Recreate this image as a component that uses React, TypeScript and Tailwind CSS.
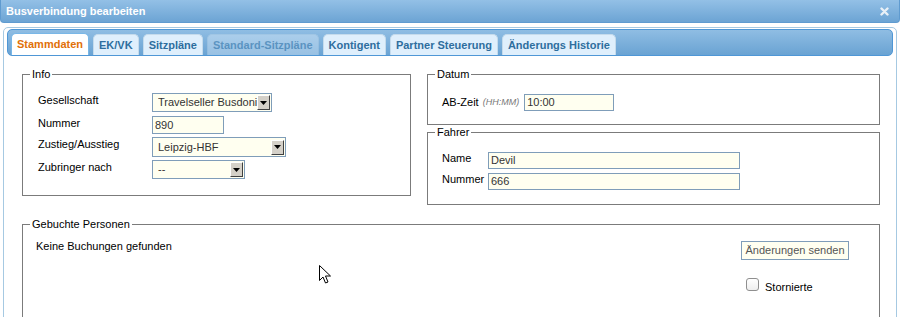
import React from "react";

type Tab = { label: string; active?: boolean; disabled?: boolean };

const tabs: Tab[] = [
  { label: "Stammdaten", active: true },
  { label: "EK/VK" },
  { label: "Sitzpläne" },
  { label: "Standard-Sitzpläne", disabled: true },
  { label: "Kontigent" },
  { label: "Partner Steuerung" },
  { label: "Änderungs Historie" },
];

function FakeSelect({ value, className }: { value: string; className: string }) {
  return (
    <div className={`flex items-center border border-[#7f9db9] bg-[#fffff0] pl-[5px] pr-[1px] ${className}`}>
      <span className="min-w-0 flex-1 overflow-hidden whitespace-nowrap text-[11px] leading-[13px] text-[#333]">{value}</span>
      <span className="flex h-[15px] w-[13px] shrink-0 items-center justify-center border border-t-white border-l-white border-r-[#404040] border-b-[#404040] bg-[#d4d0c8]">
        <svg width="7" height="4" viewBox="0 0 7 4">
          <path d="M0 0 L7 0 L3.5 4 Z" fill="#000" />
        </svg>
      </span>
    </div>
  );
}

function TextInput({ value, className }: { value: string; className: string }) {
  return (
    <div className={`flex items-center border border-[#7f9db9] bg-[#fffff0] pl-[2px] text-[11px] leading-[13px] text-[#333] ${className}`}>
      {value}
    </div>
  );
}

// fieldset with legend; padding lives on the inner div so the legend stays at the left
function Box({ title, className, inner, children }: { title: string; className: string; inner: string; children: React.ReactNode }) {
  return (
    <fieldset className={`border border-[#7b7b7b] ${className}`}>
      <legend className="ml-[7px] px-[2px] text-[11px] leading-[13px] text-black">{title}</legend>
      <div className={inner}>{children}</div>
    </fieldset>
  );
}

export default function App() {
  return (
    <div className="relative h-[317px] w-[903px] overflow-hidden bg-white font-['Liberation_Sans',Arial,sans-serif]">
      <div className="w-[900px]">
        {/* title bar */}
        <div className="flex h-[23px] items-center justify-between rounded-b-[4px] border border-t-0 border-[#5f9bd0] bg-gradient-to-b from-[#93c0e6] to-[#6ca4d4] pl-[5px] pr-[10px]">
          <span className="text-[11px] font-bold leading-[13px] text-white">Busverbindung bearbeiten</span>
          <svg width="9" height="9" viewBox="0 0 9 9">
            <path d="M1.5 1.5 L7.5 7.5 M7.5 1.5 L1.5 7.5" stroke="#e9f0f7" strokeWidth="2.4" strokeLinecap="round" />
          </svg>
        </div>

        {/* tab panel */}
        <div className="mx-[3px] mt-[4px] h-[300px] rounded-t-[5px] border border-[#a6c9e2] px-[3px] pt-[1px]">
          <div className="flex h-[27px] items-end gap-[4px] rounded-[5px] border border-[#4f97d6] bg-gradient-to-b from-[#8fbde3] to-[#6aa3d3] pl-[3px]">
            {tabs.map((t) => (
              <div
                key={t.label}
                className={
                  t.active
                    ? "flex h-[22px] items-center rounded-t-[5px] border border-b-0 border-[#79b7e7] bg-white px-[5px] text-[11px] font-bold text-[#e17009]"
                    : t.disabled
                      ? "flex h-[21px] items-center rounded-t-[5px] border border-b-0 border-[#c5dbec] bg-[#dfeffc] px-[5px] text-[11px] font-bold text-[#2e6e9e] opacity-40"
                      : "flex h-[21px] items-center rounded-t-[5px] border border-b-0 border-[#c5dbec] bg-[#dfeffc] px-[5px] text-[11px] font-bold text-[#2e6e9e]"
                }
              >
                {t.label}
              </div>
            ))}
          </div>

          <div className="pl-[15px] pr-[13px] pt-[12px]">
            <div className="flex items-start gap-[16px]">
              <Box title="Info" className="w-[389px]" inner="flex flex-col pb-[16px] pl-[15px] pt-[12px]">
                <div className="flex items-start">
                  <span className="w-[114px] pt-[1px] text-[11px] leading-[13px] text-black">Gesellschaft</span>
                  <FakeSelect value="Travelseller Busdoni" className="h-[19px] w-[120px]" />
                </div>
                <div className="mt-[4px] flex items-start">
                  <span className="w-[114px] pt-[1px] text-[11px] leading-[13px] text-black">Nummer</span>
                  <TextInput value="890" className="h-[18px] w-[72px]" />
                </div>
                <div className="mt-[3px] flex items-start">
                  <span className="w-[114px] pt-[1px] text-[11px] leading-[13px] text-black">Zustieg/Ausstieg</span>
                  <FakeSelect value="Leipzig-HBF" className="h-[20px] w-[134px]" />
                </div>
                <div className="mt-[3px] flex items-start">
                  <span className="w-[114px] pt-[1px] text-[11px] leading-[13px] text-black">Zubringer nach</span>
                  <FakeSelect value="--" className="h-[19px] w-[93px]" />
                </div>
              </Box>

              <div className="flex w-[453px] flex-col gap-[1px]">
                <Box title="Datum" className="" inner="flex items-center pb-[13px] pl-[14px] pt-[13px]">
                  <span className="text-[11px] leading-[13px] text-black">AB-Zeit</span>
                  <span className="ml-[4px] text-[9px] italic leading-[11px] text-[#777]">(HH:MM)</span>
                  <TextInput value="10:00" className="ml-[5px] h-[17px] w-[90px]" />
                </Box>
                <Box title="Fahrer" className="" inner="pb-[14px] pl-[14px] pt-[13px]">
                  <div className="flex items-start">
                    <span className="w-[46px] text-[11px] leading-[13px] text-black">Name</span>
                    <TextInput value="Devil" className="h-[17px] w-[252px]" />
                  </div>
                  <div className="mt-[4px] flex items-start">
                    <span className="w-[46px] text-[11px] leading-[13px] text-black">Nummer</span>
                    <TextInput value="666" className="h-[17px] w-[252px]" />
                  </div>
                </Box>
              </div>
            </div>

            <Box title="Gebuchte Personen" className="mt-[13px] h-[130px]" inner="flex justify-between pl-[13px] pr-[30px]">
              <span className="pt-[9px] text-[11px] leading-[13px] text-black">Keine Buchungen gefunden</span>
              <div className="flex w-[108px] flex-col pt-[10px]">
                <div className="flex h-[19px] items-center justify-center border border-[#7f9db9] bg-[#fffff0] text-[11px] leading-[13px] text-[#555]">
                  Änderungen senden
                </div>
                <div className="mt-[18px] flex items-start pl-[5px]">
                  <span className="h-[13px] w-[13px] rounded-[3px] border border-[#8f8f8f] bg-gradient-to-b from-white to-[#eeeeee]" />
                  <span className="ml-[6px] mt-[3px] text-[11px] leading-[13px] text-black">Stornierte</span>
                </div>
              </div>
            </Box>
          </div>
        </div>
      </div>

      {/* mouse pointer */}
      <svg className="absolute left-[319px] top-[265px]" width="13" height="20" viewBox="0 0 13 20">
        <path d="M0.5 0.5 L0.5 15.5 L4 12 L6.5 18 L9 17 L6.5 11 L11.5 11 Z" fill="#fff" stroke="#000" strokeWidth="1" strokeLinejoin="miter" />
      </svg>
    </div>
  );
}
